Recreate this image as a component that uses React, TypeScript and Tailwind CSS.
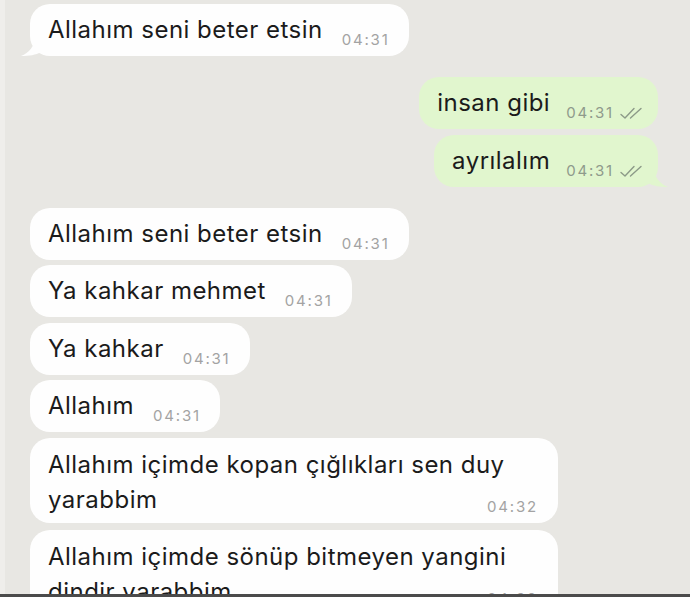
import React from 'react';

type Msg = {
  text: string;
  time: string;
  out?: boolean;
  tail?: boolean;
  multi?: boolean;
  mt: string;
};

const messages: Msg[] = [
  { text: 'Allahım seni beter etsin', time: '04:31', tail: true, mt: 'mt-[4px]' },
  { text: 'insan gibi', time: '04:31', out: true, mt: 'mt-[21px]' },
  { text: 'ayrılalım', time: '04:31', out: true, tail: true, mt: 'mt-[6px]' },
  { text: 'Allahım seni beter etsin', time: '04:31', mt: 'mt-[21px]' },
  { text: 'Ya kahkar mehmet', time: '04:31', mt: 'mt-[5px]' },
  { text: 'Ya kahkar', time: '04:31', mt: 'mt-[6px]' },
  { text: 'Allahım', time: '04:31', mt: 'mt-[5px]' },
  { text: 'Allahım içimde kopan çığlıkları sen duy yarabbim', time: '04:32', multi: true, mt: 'mt-[6px]' },
  { text: 'Allahım içimde sönüp bitmeyen yangini dindir yarabbim', time: '04:32', multi: true, mt: 'mt-[7px]' },
];

function Ticks() {
  return (
    <svg width="24" height="13" viewBox="0 0 24 13" fill="none" className="ml-[5px]">
      <path d="M2 7.5 L6 11 L15 1.5" stroke="#8c9a88" strokeWidth="1.4" strokeLinecap="round" strokeLinejoin="round" />
      <path d="M11.5 11 L22 1.5" stroke="#8c9a88" strokeWidth="1.4" strokeLinecap="round" />
    </svg>
  );
}

function Tail({ out }: { out?: boolean }) {
  if (out) {
    return (
      <svg width="20" height="20" viewBox="0 0 20 20" className="absolute -right-[10px] bottom-0">
        <path d="M6 0 C6 10 12 17 20 20 C12 20 5 19 0 16 L0 0 Z" fill="#e1f6ce" />
      </svg>
    );
  }
  return (
    <svg width="20" height="20" viewBox="0 0 20 20" className="absolute -left-[9px] bottom-0">
      <path d="M14 0 C14 10 8 17 0 20 C8 20 15 19 20 16 L20 0 Z" fill="#fefefe" />
    </svg>
  );
}

function Bubble({ m }: { m: Msg }) {
  const color = m.out ? 'bg-[#e1f6ce]' : 'bg-[#fefefe]';
  const side = m.out ? 'self-end mr-[32px]' : 'self-start ml-[30px]';
  if (m.multi) {
    return (
      <div className={`relative shrink-0 ${side} ${m.mt} ${color} w-[528px] rounded-[20px] px-[18px] pt-[9px] pb-[6px]`}>
        <p className="text-[24px] leading-[35px] tracking-[0.02em] text-[#1b1b1b]">
          {m.text}
          <span className="float-right mt-[17px] mr-[2px] text-[15px] leading-[16px] tracking-[0.12em] text-[#a3a3a3]">{m.time}</span>
        </p>
      </div>
    );
  }
  return (
    <div className={`relative shrink-0 ${side} ${m.mt} ${color} h-[52px] rounded-[20px] pl-[18px] ${m.out ? 'pr-[15px]' : 'pr-[19px]'} flex items-center`}>
      <span className="text-[24px] leading-[28px] tracking-[0.02em] text-[#1b1b1b]">{m.text}</span>
      <span className={`${m.out ? 'ml-[16px]' : 'ml-[19px]'} translate-y-[10px] text-[15px] leading-[16px] tracking-[0.12em] ${m.out ? 'text-[#8f9a8c]' : 'text-[#a3a3a3]'} flex items-center`}>
        {m.time}
        {m.out && <Ticks />}
      </span>
      {m.tail && <Tail out={m.out} />}
    </div>
  );
}

export default function App() {
  return (
    <div className="relative w-[690px] h-[597px] overflow-hidden bg-[#e8e7e3] font-['Inter','Liberation_Sans',sans-serif]">
      <div className="flex h-full">
        <div className="w-[5px] h-full bg-[#efeeeb]" />
        <div className="flex-1 flex flex-col -ml-[5px]">
          {messages.map((m, i) => (
            <Bubble key={i} m={m} />
          ))}
        </div>
      </div>
      <div className="absolute left-0 right-0 bottom-0 h-[3px] bg-[#4b4b4b]" />
    </div>
  );
}
